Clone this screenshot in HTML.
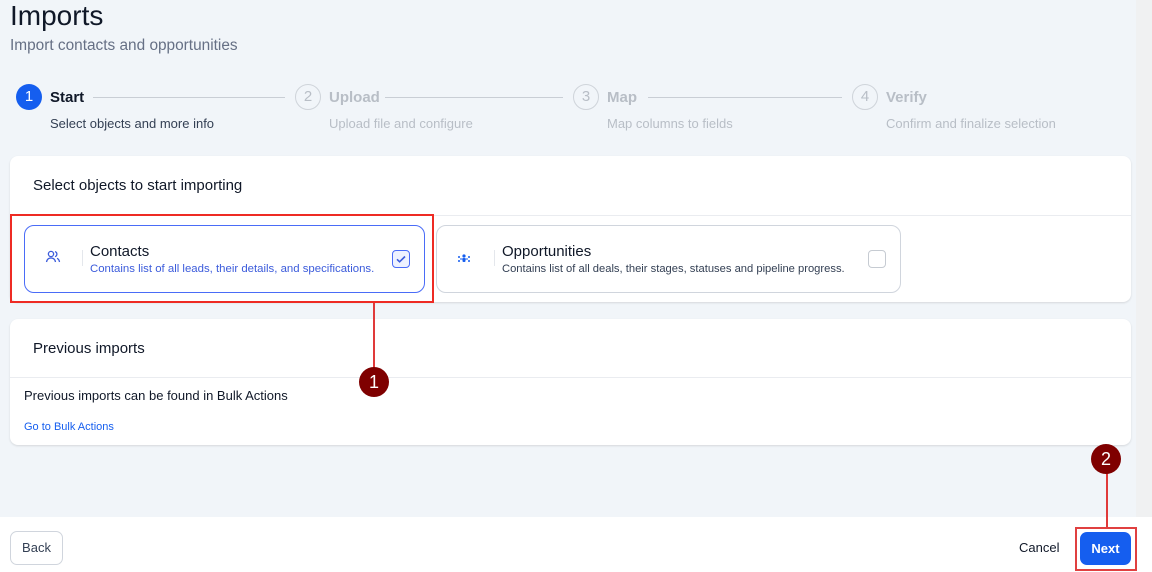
<!DOCTYPE html>
<html><head><style>
*{margin:0;padding:0;box-sizing:border-box}
body{width:1152px;height:572px;overflow:hidden;background:#f1f5f9;font-family:"Liberation Sans",sans-serif;position:relative;color:#101828}
.a{position:absolute}
.strip{left:1136px;top:0;width:16px;height:517px;background:#f0f1f2}
.step .c{position:absolute;width:26px;height:26px;border-radius:50%;border:1px solid #cfd4da;color:#b8bec6;font-size:15px;text-align:center;line-height:24px}
.t{font-size:15px;font-weight:bold;color:#b8bec6}
.s{font-size:13px;color:#b8bec6}
.line{height:1px;background:#c9ced5}
.card{background:#fff;border-radius:8px;box-shadow:0 1px 2px rgba(0,0,0,.12)}
.opt{border-radius:10px;background:#fff}
</style></head><body>
<div class="a strip"></div>
<div class="a" style="left:10px;top:0px;font-size:28px;color:#101828">Imports</div>
<div class="a" style="left:10px;top:37px;font-size:15.4px;color:#667085">Import contacts and opportunities</div>

<div class="a" style="left:16px;top:84px;width:26px;height:26px;border-radius:50%;background:#155eef;color:#fff;font-size:15px;text-align:center;line-height:26px">1</div>
<div class="a t" style="left:50px;top:89px;color:#101828">Start</div>
<div class="a s" style="left:50px;top:116px;color:#344054">Select objects and more info</div>
<div class="a line" style="left:93px;top:97px;width:192px"></div>

<div class="a step"><div class="c" style="left:295px;top:84px">2</div></div>
<div class="a t" style="left:329px;top:89px">Upload</div>
<div class="a s" style="left:329px;top:116px">Upload file and configure</div>
<div class="a line" style="left:385px;top:97px;width:178px"></div>

<div class="a step"><div class="c" style="left:573px;top:84px">3</div></div>
<div class="a t" style="left:607px;top:89px">Map</div>
<div class="a s" style="left:607px;top:116px">Map columns to fields</div>
<div class="a line" style="left:648px;top:97px;width:194px"></div>

<div class="a step"><div class="c" style="left:852px;top:84px">4</div></div>
<div class="a t" style="left:886px;top:89px">Verify</div>
<div class="a s" style="left:886px;top:116px">Confirm and finalize selection</div>

<div class="a card" style="left:10px;top:156px;width:1121px;height:146px"></div>
<div class="a" style="left:33px;top:177px;font-size:15px">Select objects to start importing</div>
<div class="a" style="left:10px;top:215px;width:1121px;height:1px;background:#eaecf0"></div>

<div class="a opt" style="left:24px;top:225px;width:401px;height:68px;border:1px solid #4a6cf7"></div>
<svg class="a" style="left:45px;top:250px" width="16" height="14" viewBox="0 0 16 14" fill="none" stroke="#3b5bdb" stroke-width="1.3"><circle cx="6" cy="4" r="2.6"/><path d="M1.5 12c.5-2.8 2.3-4 4.5-4s4 1.2 4.5 4"/><path d="M10 1.6a2.6 2.6 0 0 1 0 5M12 8.3c1.3.5 2.2 1.7 2.5 3.7"/></svg>
<div class="a" style="left:82px;top:250px;width:1px;height:16px;background:#e4e7ec"></div>
<div class="a" style="left:90px;top:243px;font-size:15px">Contacts</div>
<div class="a" style="left:90px;top:263px;font-size:11.4px;color:#3b5bdb">Contains list of all leads, their details, and specifications.</div>
<div class="a" style="left:392px;top:250px;width:18px;height:18px;border:1.5px solid #4a6cf7;border-radius:4px;background:#eef2ff"></div>
<svg class="a" style="left:395px;top:253px" width="12" height="12" viewBox="0 0 12 12"><path d="M2 6.3l2.6 2.5L10 3.5" stroke="#3b5bdb" stroke-width="1.6" fill="none"/></svg>
<div class="a" style="left:10px;top:214px;width:424px;height:89px;border:2px solid #ee2b24"></div>

<div class="a opt" style="left:436px;top:225px;width:465px;height:68px;border:1px solid #d0d5dd"></div>
<svg class="a" style="left:457px;top:252px" width="14" height="14" viewBox="0 0 14 14" fill="#155eef"><circle cx="7" cy="4" r="1.6"/><rect x="5.5" y="6" width="3" height="4" rx="1"/><circle cx="2" cy="5" r="1"/><circle cx="12" cy="5" r="1"/><circle cx="2" cy="9" r="1"/><circle cx="12" cy="9" r="1"/><rect x="3" y="6.5" width="8" height="1"/></svg>
<div class="a" style="left:494px;top:250px;width:1px;height:16px;background:#e4e7ec"></div>
<div class="a" style="left:502px;top:243px;font-size:15px">Opportunities</div>
<div class="a" style="left:502px;top:263px;font-size:11.2px;color:#344054">Contains list of all deals, their stages, statuses and pipeline progress.</div>
<div class="a" style="left:868px;top:250px;width:18px;height:18px;border:1px solid #c6cbd2;border-radius:4px"></div>

<div class="a card" style="left:10px;top:319px;width:1121px;height:126px"></div>
<div class="a" style="left:33px;top:340px;font-size:15px">Previous imports</div>
<div class="a" style="left:10px;top:377px;width:1121px;height:1px;background:#eaecf0"></div>
<div class="a" style="left:24px;top:388px;font-size:13px">Previous imports can be found in Bulk Actions</div>
<div class="a" style="left:24px;top:421px;font-size:11px;color:#155eef">Go to Bulk Actions</div>

<div class="a" style="left:373px;top:303px;width:2px;height:65px;background:#e03a3a"></div>
<div class="a" style="left:359px;top:367px;width:30px;height:30px;border-radius:50%;background:#7f0000;color:#fff;font-size:18px;text-align:center;line-height:30px">1</div>

<div class="a" style="left:0;top:517px;width:1152px;height:55px;background:#fff"></div>
<div class="a" style="left:10px;top:531px;width:53px;height:34px;border:1px solid #d0d5dd;border-radius:7px;font-size:13px;text-align:center;line-height:32px;color:#344054;background:#fff">Back</div>
<div class="a" style="left:1019px;top:540px;font-size:13px;color:#101828">Cancel</div>
<div class="a" style="left:1106px;top:472px;width:2px;height:57px;background:#e03a3a"></div>
<div class="a" style="left:1091px;top:444px;width:30px;height:30px;border-radius:50%;background:#7f0000;color:#fff;font-size:18px;text-align:center;line-height:30px">2</div>
<div class="a" style="left:1075px;top:527px;width:62px;height:44px;border:2px solid #e04040"></div>
<div class="a" style="left:1080px;top:532px;width:51px;height:33px;border-radius:7px;background:#155eef;color:#fff;font-size:13px;font-weight:bold;text-align:center;line-height:33px">Next</div>
</body></html>
